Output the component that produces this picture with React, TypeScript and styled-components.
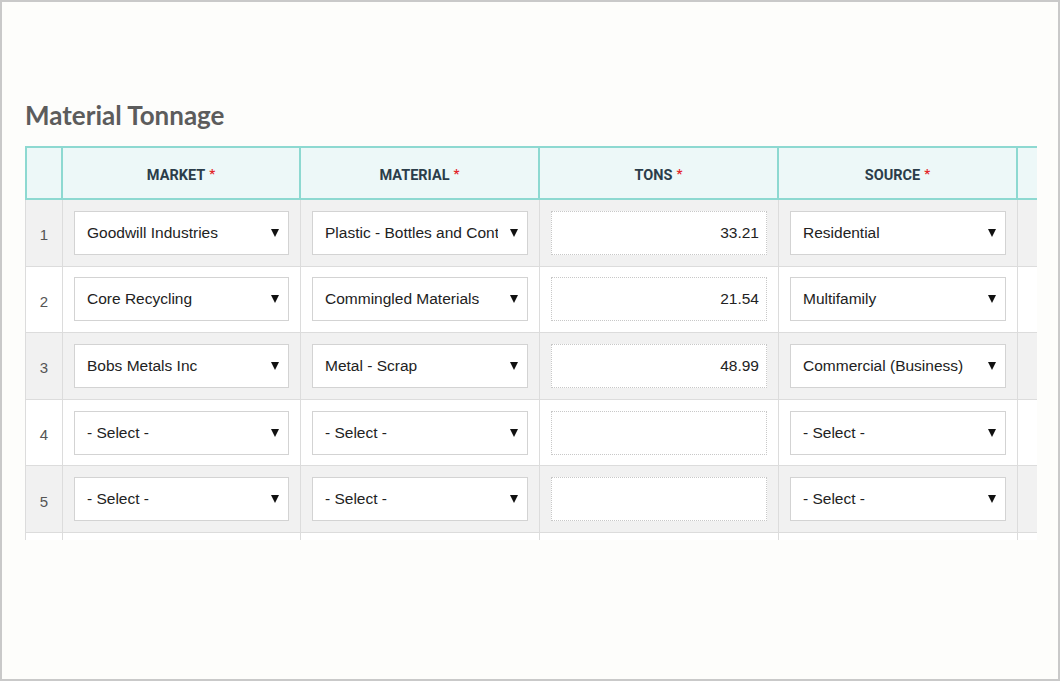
import React from "react";
import styled, { createGlobalStyle } from "styled-components";

const GlobalStyle = createGlobalStyle`
  html, body {
    margin: 0;
    padding: 0;
    background: #fdfdfb;
  }
  body {
    font-family: "Liberation Sans", Arial, sans-serif;
  }
`;

const Frame = styled.div`
  width: 1060px;
  height: 681px;
  box-sizing: border-box;
  border: 2px solid #c9c9c9;
  background: #fdfdfb;
  padding: 98px 0 0 23px;
  overflow: hidden;
`;

const Title = styled.h2`
  margin: 0;
  font-family: Lato, "Noto Sans", sans-serif;
  font-weight: 700;
  font-size: 26px;
  line-height: 30px;
  color: #5c5c5c;
`;

const TableClip = styled.div`
  margin-top: 16px;
  width: 1012px;
  height: 394px;
  overflow: hidden;
`;

const COLS = "38px 238px 239px 239px 239px 239px";

const HeaderRow = styled.div`
  display: grid;
  grid-template-columns: ${COLS};
  width: 1232px;
  height: 54px;
  box-sizing: border-box;
  background: #edf8f8;
  border-top: 2px solid #8dd9d1;
  border-bottom: 2px solid #8dd9d1;
`;

const HeaderCell = styled.div<{ $first?: boolean }>`
  display: flex;
  align-items: center;
  justify-content: center;
  box-sizing: border-box;
  border-right: 2px solid #8dd9d1;
  border-left: ${(p) => (p.$first ? "2px solid #8dd9d1" : "none")};
  font-family: Roboto, "Liberation Sans", sans-serif;
  font-weight: 700;
  font-size: 14.5px;
  color: #2b3d4a;
  padding-top: 5px;
`;

const Required = styled.span`
  color: #e3262b;
  font-size: 13px;
  margin-left: 4px;
  position: relative;
  top: -2px;
`;

const BodyRow = styled.div<{ $alt: boolean }>`
  display: grid;
  grid-template-columns: ${COLS};
  width: 1232px;
  height: 66.6px;
  box-sizing: border-box;
  background: ${(p) => (p.$alt ? "#f1f1f1" : "#ffffff")};
  border-bottom: 1px solid #dcdcdc;
`;

const Cell = styled.div<{ $first?: boolean }>`
  display: flex;
  align-items: center;
  box-sizing: border-box;
  padding: 0 11px;
  border-right: 1px solid #dcdcdc;
  border-left: ${(p) => (p.$first ? "1px solid #dcdcdc" : "none")};
  min-width: 0;
`;

const NumCell = styled(Cell)`
  justify-content: center;
  padding: 4px 0 0;
  font-size: 15px;
  color: #555;
`;

const SelectBox = styled.div`
  display: flex;
  align-items: center;
  width: 100%;
  height: 44px;
  box-sizing: border-box;
  background: #fff;
  border: 1px solid #d3d3d3;
  padding: 0 9px 0 12px;
  font-size: 15.5px;
  color: #222;
  min-width: 0;
`;

const SelectText = styled.span`
  flex: 1;
  white-space: nowrap;
  overflow: hidden;
  margin-right: 12px;
`;

const Arrow = styled.span`
  width: 0;
  height: 0;
  border-left: 4px solid transparent;
  border-right: 4px solid transparent;
  border-top: 8px solid #111;
  flex: none;
`;

const TonsInput = styled.div`
  width: 100%;
  height: 44px;
  box-sizing: border-box;
  background: #fff;
  border: 1px dotted #c8c8c8;
  display: flex;
  align-items: center;
  justify-content: flex-end;
  padding: 0 7px 0 12px;
  font-size: 15.5px;
  color: #222;
`;

const Select = ({ value }: { value: string }) => (
  <SelectBox>
    <SelectText>{value}</SelectText>
    <Arrow />
  </SelectBox>
);

type Row = { market: string; material: string; tons: string; source: string };

const rows: Row[] = [
  { market: "Goodwill Industries", material: "Plastic - Bottles and Containers", tons: "33.21", source: "Residential" },
  { market: "Core Recycling", material: "Commingled Materials", tons: "21.54", source: "Multifamily" },
  { market: "Bobs Metals Inc", material: "Metal - Scrap", tons: "48.99", source: "Commercial (Business)" },
  { market: "- Select -", material: "- Select -", tons: "", source: "- Select -" },
  { market: "- Select -", material: "- Select -", tons: "", source: "- Select -" },
];

const headers = ["MARKET", "MATERIAL", "TONS", "SOURCE"];

export default function App() {
  return (
    <>
      <GlobalStyle />
      <Frame>
        <Title>Material Tonnage</Title>
        <TableClip>
          <HeaderRow>
            <HeaderCell $first />
            {headers.map((h) => (
              <HeaderCell key={h}>
                {h}
                <Required>*</Required>
              </HeaderCell>
            ))}
            <HeaderCell />
          </HeaderRow>
          {rows.map((r, i) => (
            <BodyRow key={i} $alt={i % 2 === 0}>
              <NumCell $first>{i + 1}</NumCell>
              <Cell>
                <Select value={r.market} />
              </Cell>
              <Cell>
                <Select value={r.material} />
              </Cell>
              <Cell>
                <TonsInput>{r.tons}</TonsInput>
              </Cell>
              <Cell>
                <Select value={r.source} />
              </Cell>
              <Cell />
            </BodyRow>
          ))}
          <BodyRow $alt={false}>
            <NumCell $first />
            <Cell />
            <Cell />
            <Cell />
            <Cell />
            <Cell />
          </BodyRow>
        </TableClip>
      </Frame>
    </>
  );
}
